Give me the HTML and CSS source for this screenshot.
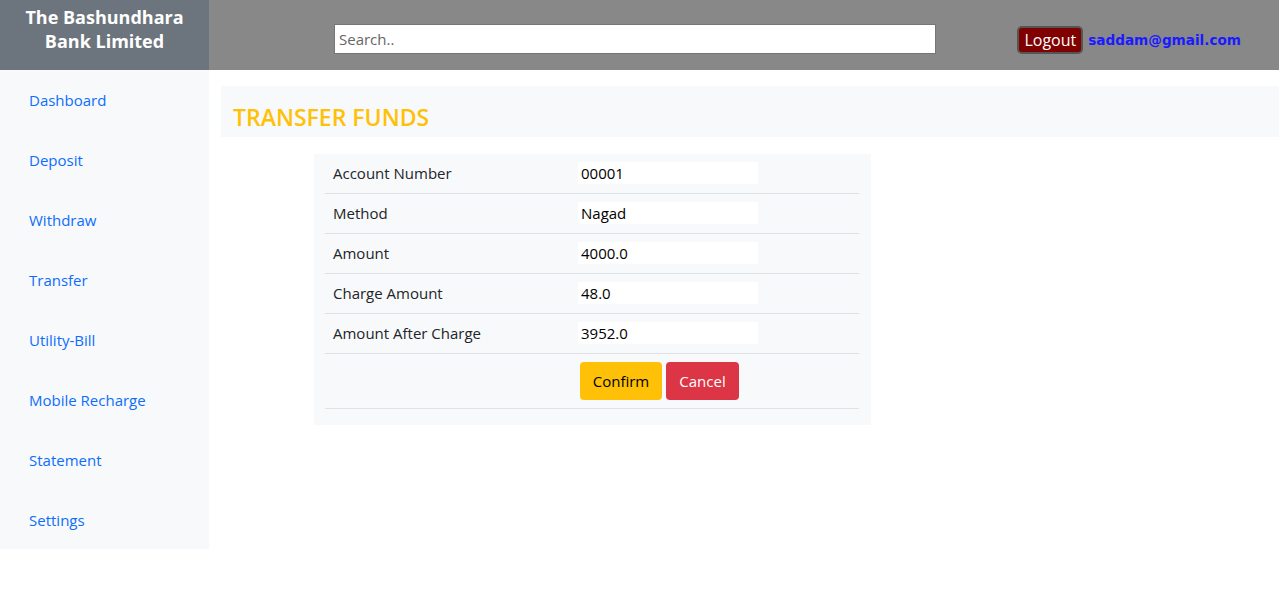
FILE: index.html
```html
<!DOCTYPE html>
<html>
<head>
<meta charset="utf-8">
<link rel="stylesheet" href="styles.css">
</head>
<body>
<header class="topbar">
  <div class="brand">The Bashundhara<br>Bank Limited</div>
  <div class="search-wrap"><input class="search" type="text" placeholder="Search.."></div>
  <div class="user">
    <button class="logout">Logout</button>
    <a class="email" href="#">saddam@gmail.com</a>
  </div>
</header>
<div class="layout">
  <nav class="sidebar">
    <a href="#">Dashboard</a>
    <a href="#">Deposit</a>
    <a href="#">Withdraw</a>
    <a href="#">Transfer</a>
    <a href="#">Utility-Bill</a>
    <a href="#">Mobile Recharge</a>
    <a href="#">Statement</a>
    <a href="#">Settings</a>
  </nav>
  <main class="main">
    <div class="title-box"><h2>TRANSFER FUNDS</h2></div>
    <div class="card">
      <table class="form-table">
        <tr><td class="lbl">Account Number</td><td><input class="val" value="00001"></td></tr>
        <tr><td class="lbl">Method</td><td><input class="val" value="Nagad"></td></tr>
        <tr><td class="lbl">Amount</td><td><input class="val" value="4000.0"></td></tr>
        <tr><td class="lbl">Charge Amount</td><td><input class="val" value="48.0"></td></tr>
        <tr><td class="lbl">Amount After Charge</td><td><input class="val" value="3952.0"></td></tr>
        <tr class="btn-row"><td></td><td><div class="btns"><button class="btn confirm">Confirm</button><button class="btn cancel">Cancel</button></div></td></tr>
      </table>
    </div>
  </main>
</div>
</body>
</html>
```
FILE: styles.css
```css
* { box-sizing: border-box; }
body {
  margin: 0;
  font-family: "Open Sans", "Noto Sans", sans-serif;
  font-size: 15px;
  color: #212529;
  background: #fff;
}
.topbar {
  display: flex;
  align-items: center;
  height: 70px;
  background: #888888;
}
.brand {
  width: 209px;
  height: 70px;
  background: #6c757d;
  color: #fff;
  font-weight: bold;
  font-size: 18px;
  line-height: 24px;
  text-align: center;
  padding-top: 5px;
}
.search-wrap {
  flex: 1;
  padding-left: 125px;
}
.search {
  width: 602px;
  height: 30px;
  border: 1px solid #767676;
  padding: 1px 4px;
  font-family: "Open Sans", "Noto Sans", sans-serif;
  font-size: 15px;
  color: #333;
  margin-top: 8px;
}
.search::placeholder { color: #666; }
.user {
  display: flex;
  align-items: center;
  gap: 5px;
  padding-right: 38px;
  margin-top: 9px;
}
.logout {
  background: #800000;
  color: #fff;
  border: 2px solid #555;
  border-radius: 5px;
  font-family: "Open Sans", "Noto Sans", sans-serif;
  font-size: 16px;
  height: 28px;
  padding: 0 5px;
  line-height: 22px;
}
.email {
  color: #1a1aff;
  font-weight: bold;
  text-decoration: none;
  font-family: "DejaVu Sans", sans-serif;
  font-size: 13.6px;
}
.layout {
  display: flex;
  align-items: flex-start;
}
.sidebar {
  width: 209px;
  flex-shrink: 0;
  background: #f8f9fa;
  display: flex;
  flex-direction: column;
  padding: 0 0 0 29px;
  height: 479px;
}
.sidebar a {
  flex-shrink: 0;
  color: #0d6efd;
  text-decoration: none;
  height: 60px;
  line-height: 60px;
}
.main {
  flex: 1;
  padding: 16px 0 0 12px;
}
.title-box {
  background: #f8f9fa;
  height: 51px;
  padding: 0 12px;
}
.title-box h2 {
  margin: 0;
  padding-top: 16px;
  color: #ffc107;
  font-size: 23px;
  font-weight: 600;
  line-height: 30px;
}
.card {
  margin: 17px 0 0 93px;
  width: 557px;
  background: #f8f9fa;
  padding: 0 12px 16px 11px;
  display: flow-root;
}
.form-table {
  width: 100%;
  border-collapse: collapse;
  margin-top: -1px;
}
.form-table td {
  border-bottom: 1px solid #dee2e6;
  height: 40px;
  padding: 0 0 0 8px;
  vertical-align: middle;
}
.form-table td.lbl { width: 253px; }
.val {
  width: 180px;
  height: 22px;
  border: none;
  background: #fff;
  font-family: "Open Sans", "Noto Sans", sans-serif;
  font-size: 15px;
  color: #000;
  padding: 0 3px;
  margin-left: -8px;
  display: block;
}
.btn-row td { height: 55px; }
.btns {
  display: flex;
  gap: 4px;
}
.btn {
  font-family: "Open Sans", "Noto Sans", sans-serif;
  font-size: 15px;
  height: 38px;
  border: none;
  border-radius: 4px;
  padding: 0 12px;
}
.btn-row td:last-child { padding-left: 2px; }
.confirm { background: #ffc107; color: #000; width: 82px; }
.cancel { background: #dc3545; color: #fff; width: 73px; }
```
